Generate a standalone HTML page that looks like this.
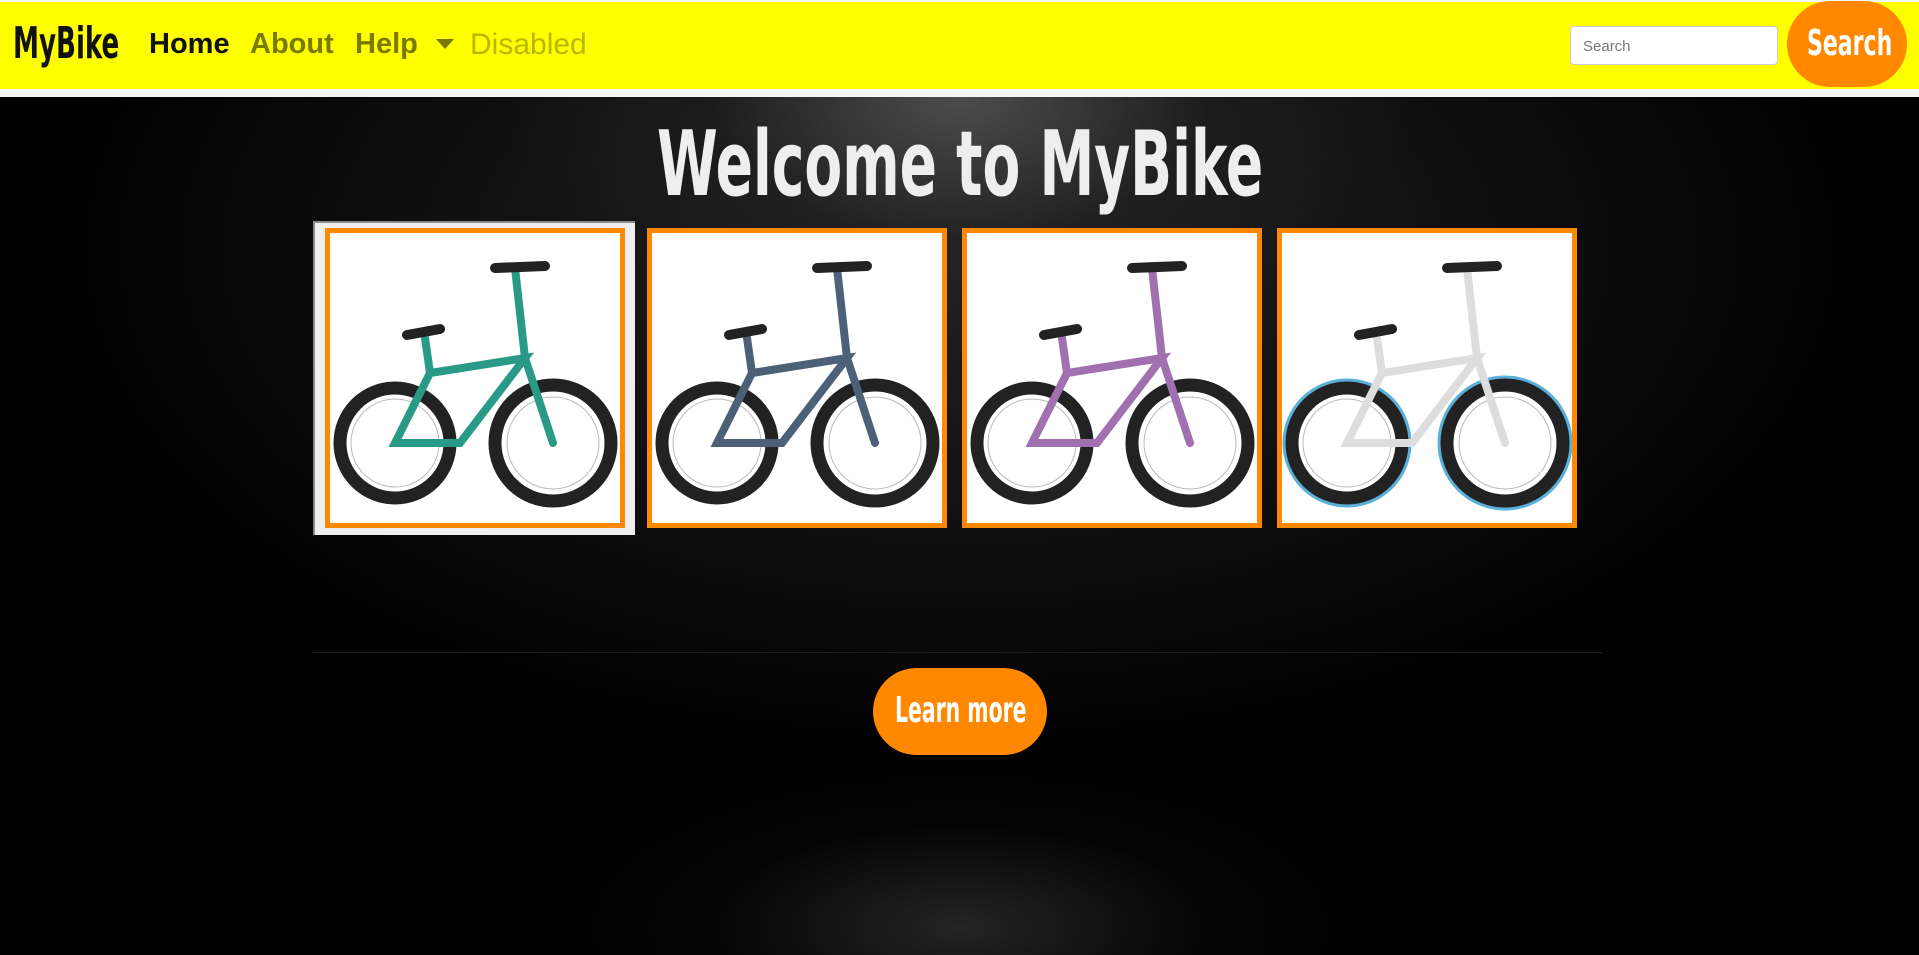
<!DOCTYPE html>
<html><head><meta charset="utf-8"><style>
*{margin:0;padding:0;box-sizing:border-box}
body{width:1919px;height:955px;overflow:hidden;font-family:"Liberation Sans",sans-serif;background:#000;position:relative}
.nav{position:absolute;left:0;top:0;width:1919px;height:89px;background:#ffff00;border-top:2px solid #f4f6f9}
.strip{position:absolute;left:0;top:89px;width:1919px;height:8px;background:#f4f6f9}
.t{position:absolute;white-space:nowrap}
.cond{font-family:"DejaVu Sans Condensed","Liberation Sans",sans-serif;transform-origin:0 0}
.hero{position:absolute;left:0;top:97px;width:1919px;height:858px;
background:radial-gradient(ellipse 450px 260px at 960px 0px,rgba(90,90,90,.8),rgba(35,35,35,.5) 55%,rgba(0,0,0,0) 100%),
radial-gradient(ellipse 420px 170px at 960px 830px,rgba(60,60,60,.6),rgba(20,20,20,.2) 60%,rgba(0,0,0,0) 100%),
radial-gradient(ellipse 900px 500px at 960px 150px,#222,#080808 80%,#000 100%);}
.card{position:absolute;background:#fff;border:5px solid #ff8800;overflow:hidden}
.frame{position:absolute;left:313px;top:221px;width:322px;height:314px;background:#efefef;border-top:2px solid #888;border-left:2px solid #888}
.btn{position:absolute;background:#ff8800;color:#fff;border-radius:44px;text-align:center}
</style></head><body>
<div class="nav"></div>
<div class="strip"></div>
<div class="t cond" style="left:13px;top:18px;font-size:44px;font-weight:bold;color:#111;transform:scaleX(.66)">MyBike</div>
<div class="t" style="left:149px;top:28px;font-size:29px;font-weight:bold;color:#111">Home</div>
<div class="t" style="left:250px;top:28px;font-size:29px;font-weight:bold;color:#7a7a00">About</div>
<div class="t" style="left:355px;top:28px;font-size:29px;font-weight:bold;color:#7a7a00">Help</div>
<div class="t" style="left:436px;top:39px;width:0;height:0;border-left:9px solid transparent;border-right:9px solid transparent;border-top:10px solid #7a7a00"></div>
<div class="t" style="left:470px;top:28px;font-size:30px;color:#b8b800">Disabled</div>
<div class="t" style="left:1570px;top:26px;width:208px;height:39px;background:#fff;border:1px solid #ccc;border-radius:4px;font-size:15px;color:#777;padding:11px 12px">Search</div>
<div class="btn" style="left:1787px;top:1px;width:120px;height:86px;border-radius:43px"><span class="t cond" style="left:20px;top:22px;font-size:36px;transform:scaleX(.68);font-weight:bold">Search</span></div>
<div class="hero"></div>
<div class="t cond" style="left:657px;top:112px;font-size:90px;font-weight:bold;color:#eee;transform:scaleX(.68)">Welcome to MyBike</div>
<div class="frame"></div>
<svg width="0" height="0" style="position:absolute"><defs>
<g id="bike" fill="none" stroke-linecap="round">
<circle cx="60" cy="190" r="55" stroke="#222" stroke-width="13"/>
<circle cx="218" cy="190" r="58" stroke="#222" stroke-width="13"/>
<circle cx="60" cy="190" r="44" stroke="#bbb" stroke-width="1"/>
<circle cx="218" cy="190" r="46" stroke="#bbb" stroke-width="1"/>
<path d="M60 190 L125 190 L190 105 L95 120 Z M95 120 L90 85 M190 105 L218 190 M190 105 L180 15" stroke="var(--c)" stroke-width="8"/>
<path d="M72 82 L105 76 M160 15 L210 13" stroke="#222" stroke-width="10"/>
</g></defs></svg>
<div class="card" style="left:325px;top:228px;width:300px;height:300px"><svg width="290" height="290" viewBox="0 0 290 290" style="--c:#2a9a88"><use href="#bike" transform="translate(5,20)"/></svg></div>
<div class="card" style="left:647px;top:228px;width:300px;height:300px"><svg width="290" height="290" viewBox="0 0 290 290" style="--c:#4c6078"><use href="#bike" transform="translate(5,20)"/></svg></div>
<div class="card" style="left:962px;top:228px;width:300px;height:300px"><svg width="290" height="290" viewBox="0 0 290 290" style="--c:#a070b0"><use href="#bike" transform="translate(5,20)"/></svg></div>
<div class="card" style="left:1277px;top:228px;width:300px;height:300px"><svg width="290" height="290" viewBox="0 0 290 290" style="--c:#ddd"><g transform="translate(5,20)"><circle cx="60" cy="190" r="57" fill="none" stroke="#5ab0d8" stroke-width="15"/><circle cx="218" cy="190" r="60" fill="none" stroke="#5ab0d8" stroke-width="15"/></g><use href="#bike" transform="translate(5,20)"/></svg></div>
<div class="t" style="left:313px;top:652px;width:1290px;height:1px;background:#1c1c1c"></div>
<div class="btn" style="left:873px;top:668px;width:174px;height:87px"><span class="t cond" style="left:22px;top:22px;font-size:36px;font-weight:bold;transform:scaleX(.63)">Learn more</span></div>
</body></html>
